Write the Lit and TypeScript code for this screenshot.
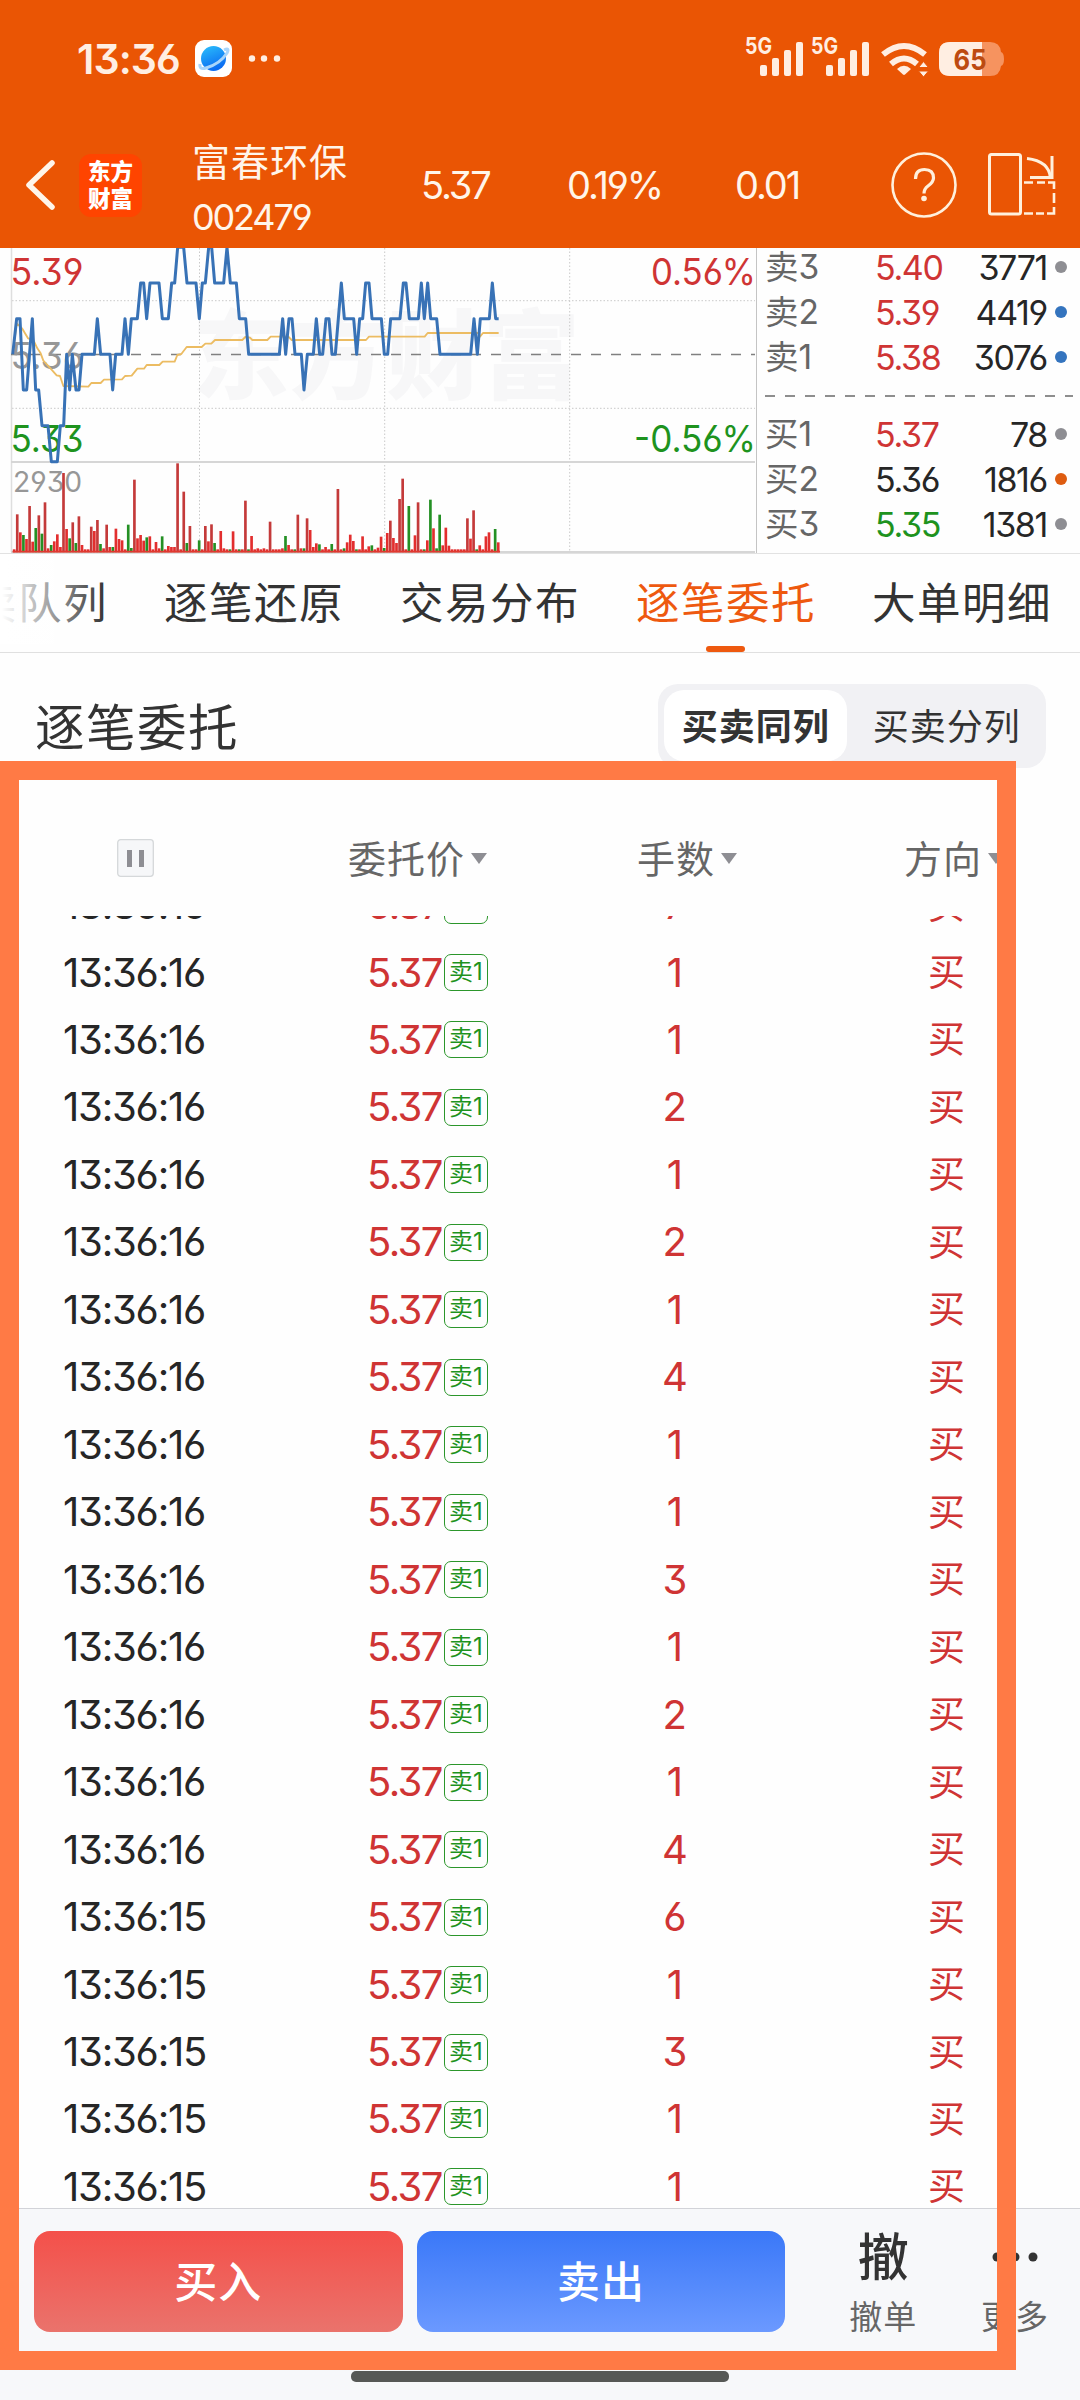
import { LitElement, html, css, svg } from "lit";
import { customElement } from "lit/decorators.js";
import { classMap } from "lit/directives/class-map.js";

const shared = css`
  * { box-sizing: border-box; }
  :host { display: block; font-family: "Noto Sans CJK SC", sans-serif; }
  svg { display: block; flex: none; overflow: visible; }
  .n {
    font-family: Inter, "Noto Sans CJK SC", sans-serif;
    font-feature-settings: "cv09" 1, "cv03" 1, "cv04" 1;
    letter-spacing: -0.04em;
    white-space: nowrap;
  }
`;

@customElement("status-bar")
class StatusBar extends LitElement {
  static styles = [shared, css`
    :host { height: 120px; color: #ffeee2; }
    .bar { display: flex; align-items: center; height: 118px; padding: 0 76px 0 77px; }
    .clock { font-size: 41px; font-weight: 600; line-height: 50px; width: 118px; letter-spacing: -0.022em; }
    .grow { flex: 1; }
  `];
  private signal(x: number) {
    return svg`
      <text x=${x} y="54" font-family="Inter, sans-serif" font-weight="700" font-size="23" textLength="27" lengthAdjust="spacingAndGlyphs">5G</text>
      <rect x=${x + 15} y="65" width="7" height="11" rx="2"/>
      <rect x=${x + 27} y="58" width="7" height="18" rx="2"/>
      <rect x=${x + 39} y="50" width="7" height="26" rx="2"/>
      <rect x=${x + 51} y="42" width="7" height="34" rx="2"/>`;
  }
  render() {
    return html`<div class="bar">
      <span class="n clock">13:36</span>
      <svg width="90" height="38" viewBox="195 41 90 38">
        <defs><linearGradient id="g" x1="0" y1="0" x2="0.4" y2="1"><stop offset="0" stop-color="#2cc0fb"/><stop offset="1" stop-color="#0b6cf2"/></linearGradient></defs>
        <rect x="195" y="41" width="37" height="37" rx="9" fill="#fff"/>
        <circle cx="213.500" cy="59.500" r="12.500" fill="url(#g)"/>
        <path d="M224 51 Q230 48 227 54 Q220 65 206 69 Q199 71 200 65" fill="none" stroke="#a9d5fb" stroke-width="3"/>
        <g fill="#ffeee2"><circle cx="252" cy="59.500" r="3.200"/><circle cx="264" cy="59.500" r="3.200"/><circle cx="277" cy="59.500" r="3.200"/></g>
      </svg>
      <span class="grow"></span>
      <svg width="259" height="60" viewBox="745 29 259 60" fill="#ffeee2">
        ${this.signal(745)}${this.signal(811)}
        <g fill="none" stroke="#ffeee2" stroke-width="6">
          <path d="M883 54.500 Q904 37.500 925 54.500"/>
          <path d="M891 64 Q904 53 917 64"/>
        </g>
        <path d="M897 69 Q904 62.500 911 69 L905 74.500 Q904 75.300 903 74.500Z"/>
        <path d="M923.500 61.500 l5 6 h-10z M923.500 77 l5 -6 h-10z" stroke="#ea5504" stroke-width="1"/>
        <path d="M950 42 H990 Q1000 42 1001 52 Q1004 53 1004 59 Q1004 65 1001 66 Q1000 76 990 76 H950 Q939 76 939 65 V53 Q939 42 950 42Z" fill="#f6935f"/>
        <path d="M950 42 H982 V76 H950 Q939 76 939 65 V53 Q939 42 950 42Z"/>
        <text x="953.500" y="69.500" font-family="Inter, sans-serif" font-weight="700" font-size="29" fill="#bd4a10" textLength="33" lengthAdjust="spacingAndGlyphs">65</text>
      </svg>
    </div>`;
  }
}

@customElement("stock-header")
class StockHeader extends LitElement {
  static styles = [shared, css`
    :host { height: 128px; color: #fff5ea; }
    .row { display: grid; grid-template-columns: 79px 113px 229px 146px 168px 157px 1fr; align-items: center; height: 130px; }
    .back { padding-left: 24px; }
    .logo { width: 63px; height: 63px; border-radius: 12px; background: #ff4400; color: #fff; font-weight: 900; font-size: 22.500px; line-height: 27px; text-align: center; padding-top: 3px; }
    .name { font-size: 38px; letter-spacing: 1px; line-height: 50px; margin-top: 1px; }
    .code { font-size: 36px; line-height: 40px; margin-top: 12px; letter-spacing: -0.06em; }
    .q { font-size: 38px; line-height: 50px; letter-spacing: -0.055em; }
    .icons { display: flex; gap: 31px; align-items: center; }
  `];
  render() {
    return html`<div class="row">
      <div class="back"><svg width="34" height="56" viewBox="0 0 34 56" fill="none" stroke="#fff5ea" stroke-width="5.500" stroke-linecap="round" stroke-linejoin="round"><path d="M28 6 L5 28 L28 50"/></svg></div>
      <div class="logo">东方<br>财富</div>
      <div><div class="name">富春环保</div><div class="n code">002479</div></div>
      <div class="n q">5.37</div>
      <div class="n q">0.19%</div>
      <div class="n q">0.01</div>
      <div class="icons">
        <svg width="66" height="66" viewBox="0 0 66 66" fill="none" stroke="#fff0dc" stroke-width="2.600">
          <circle cx="32" cy="33" r="31.500"/>
          <path d="M23.500 27 Q23.500 17.500 32.500 17.500 Q41.500 17.500 41.500 26 Q41.500 30 36 34 Q32 37 32 41.500" stroke-width="3.200"/>
          <circle cx="32" cy="46.500" r="2.800" fill="#fff0dc" stroke="none"/>
        </svg>
        <svg width="68" height="64" viewBox="989 153 68 64" fill="none" stroke="#fff0dc" stroke-width="3">
          <rect x="989.500" y="154.500" width="31" height="59.500" rx="2"/>
          <path d="M1027 158.500 Q1049 161 1050.500 178"/>
          <path d="M1052 156 V177.500 H1030"/>
          <path d="M1024 182.500 H1033 M1037 182.500 H1045 M1048 182.500 H1054 V189 M1054 193 V203 M1054 207 V213.500 H1047 M1044 213.500 H1036 M1033 213.500 H1024" stroke-width="2.600"/>
        </svg>
      </div>
    </div>`;
  }
}

const PRICE = "38,343 50,236 60,236 70,450 80,450 97,236 107,450 116,450 126,557 144,557 154,665 172,665 181,557 191,557 200,343 209,450 217,343 228,450 237,450 246,343 283,343 292,236 302,343 330,343 338,450 347,343 366,343 375,236 385,343 394,236 412,236 422,129 431,129 440,236 450,129 477,129 487,236 505,236 515,129 524,129 533,22 551,22 561,129 588,129 598,236 607,129 616,129 626,22 635,22 644,129 671,129 681,22 691,129 709,129 718,236 737,236 746,343 838,343 848,236 857,343 867,236 876,236 885,343 904,343 912,450 922,343 940,343 949,236 959,343 968,343 978,236 987,236 996,343 1006,343 1024,129 1033,236 1061,236 1070,343 1079,236 1088,236 1097,129 1107,129 1116,236 1144,236 1153,343 1163,343 1172,236 1200,236 1210,129 1218,129 1228,236 1255,236 1264,129 1273,236 1283,129 1292,236 1310,236 1320,343 1412,343 1422,236 1432,343 1441,236 1468,236 1477,129 1487,236 1496,236";
const AVERAGE = "38,343 50,250 66,265 84,295 100,300 112,325 122,340 130,362 154,388 170,406 180,408 190,438 265,440 274,429 302,429 312,419 366,418 375,408 395,407 412,386 432,386 440,375 478,375 488,365 524,365 532,345 544,342 560,321 605,321 616,311 634,311 645,300 727,300 736,291 750,293 757,300 802,300 812,290 865,290 875,300 1098,300 1107,290 1274,290 1283,279 1435,279 1440,290 1449,279 1496,279";
// Per-minute volume; a negative value is a falling minute.
const VOLUME = [9,114,60,-52,40,139,32,-73,111,-56,150,12,-22,33,54,16,238,70,-42,90,-28,108,22,9,9,77,64,97,-25,12,83,16,-16,71,40,36,9,-83,-13,218,42,52,35,-45,48,9,31,12,-48,9,19,16,16,267,9,182,-28,79,9,9,-36,9,79,33,84,-28,9,64,12,9,-9,63,9,-9,9,155,-9,49,9,12,9,12,9,92,9,9,9,12,-49,22,9,-9,113,12,-12,102,67,16,27,-24,9,16,9,-25,9,190,9,-12,30,53,34,-9,9,48,9,18,-21,9,14,47,-13,58,95,43,28,160,221,9,-139,9,51,150,9,-9,36,-158,72,-12,-113,21,74,20,9,9,9,9,9,102,41,126,-9,21,9,48,60,9,-70,30];

@customElement("minute-chart")
class MinuteChart extends LitElement {
  static styles = [shared, css`
    :host { overflow: hidden; }
    text { font-family: Inter, "Noto Sans CJK SC", sans-serif; font-feature-settings: "cv09" 1, "cv03" 1, "cv04" 1; }
    .mark { font-family: "Noto Sans CJK SC", sans-serif; font-weight: 900; font-size: 97px; fill: #f7f7f8; }
    .up { fill: #cf3434; } .down { fill: #1e931e; } .flat { fill: #979797; }
    .lab { font-size: 37px; }
  `];
  private label(x: number, y: number, w: number, cls: string, t: string) {
    return svg`<text class="lab ${cls}" x=${x} y=${y} textLength=${w} lengthAdjust="spacingAndGlyphs">${t}</text>`;
  }
  render() {
    return html`<svg width="757" height="305" viewBox="0 248 757 305">
      <text class="mark" x="192" y="391" textLength="388">东方财富</text>
      <g fill="none" stroke="#c9c9c9" stroke-width="1" stroke-dasharray="1.500 2">
        <path d="M12 300.700H755 M12 408.300H755 M199.500 248V552 M384.700 248V552 M569.700 248V552"/>
      </g>
      <path d="M11.500 248V552" stroke="#dedede" stroke-width="1.500"/>
      <path d="M11 462H755 M11 552H755" stroke="#d6d6d6" stroke-width="2"/>
      <path d="M756.500 248V553" stroke="#c4c4c4" stroke-width="1"/>
      <path d="M11 354.500H755" stroke="#808080" stroke-width="1.600" stroke-dasharray="10 10"/>
      ${this.label(10.5, 285, 73, "up", "5.39")}
      ${this.label(10.5, 368.5, 73, "flat", "5.36")}
      ${this.label(10.5, 452, 73, "down", "5.33")}
      ${this.label(651, 285, 105, "up", "0.56%")}
      ${this.label(634, 452, 122, "down", "-0.56%")}
      <text class="flat" x="13" y="492" font-size="28" textLength="69" lengthAdjust="spacingAndGlyphs">2930</text>
      <g transform="translate(0 240) scale(.33333)" fill="none" stroke-linejoin="round">
        <polyline points=${AVERAGE} stroke="#ecbc62" stroke-width="5.500"/>
        ${VOLUME.map((v, i) => svg`<rect x=${38.5 + i * 9.25} y=${937 - Math.abs(v)} width="8" height=${Math.abs(v)} fill=${v < 0 ? "#249024" : Math.abs(v) > 75 ? "#c43a3a" : "#e22e2e"}/>`)}
        <path d="M38 935H1500" stroke="#e03a30" stroke-width="5"/>
        <polyline points=${PRICE} stroke="#3872b6" stroke-width="9"/>
      </g>
    </svg>`;
  }
}

@customElement("order-book")
class OrderBook extends LitElement {
  static styles = [shared, css`
    :host { flex: 1; padding: 0 13px 0 8px; }
    .row { display: grid; grid-template-columns: 110px 1fr 7px 13px; height: 45px; align-items: center; font-size: 34px; line-height: 45px; color: #262626; }
    .rows { height: 135px; margin-top: -3px; }
    .row > * { margin-top: -1px; }
    .side { color: #666; font-size: 33.500px; letter-spacing: 0; }
    .vals { display: flex; justify-content: space-between; }
    .up { color: #cf3434; } .down { color: #1e931e; }
    .dot { width: 12px; height: 12px; border-radius: 50%; background: #8e8e93; grid-column: 4; margin-left: 1px; }
    .blue { background: #3474be; } .orange { background: #de5c10; }
    .dash { height: 2px; margin: 15px -6px 15px 0; background: repeating-linear-gradient(90deg, #8e8e8e 0 10px, transparent 10px 20px); }
    .buy { margin-top: 1px; }
  `];
  private row([s, p, c, q, d]: string[]) {
    return html`<div class="row"><span class="n side">${s}</span><span class="vals"><span class="n ${c}">${p}</span><span class="n">${q}</span></span><i class="dot ${d}"></i></div>`;
  }
  render() {
    return html`
      <div class="rows">${[["卖3", "5.40", "up", "3771", ""], ["卖2", "5.39", "up", "4419", "blue"], ["卖1", "5.38", "up", "3076", "blue"]].map((r) => this.row(r))}</div>
      <div class="dash"></div>
      <div class="rows buy">${[["买1", "5.37", "up", "78", ""], ["买2", "5.36", "", "1816", "orange"], ["买3", "5.35", "down", "1381", ""]].map((r) => this.row(r))}</div>`;
  }
}

@customElement("detail-tabs")
class DetailTabs extends LitElement {
  static styles = [shared, css`
    :host { height: 100px; border-top: 1px solid #e2e2e2; border-bottom: 1px solid #e0e0e0; }
    .tabs { position: relative; display: flex; gap: 56px; margin-left: -72px; overflow: hidden; height: 98px; width: 1152px; font-size: 43.500px; letter-spacing: 1.500px; color: #333; white-space: nowrap; }
    .tab { flex: none; width: 180px; line-height: 94px; display: flex; flex-direction: column; align-items: center; }
    .tab span { height: 92px; }
    .on { color: #ee590f; }
    .on::after { content: ""; width: 39px; height: 6px; border-radius: 3px; background: #ee590f; margin-right: 1px; }
    .fade { position: absolute; left: 72px; top: 0; width: 106px; height: 90px; background: linear-gradient(90deg, #fff 2%, #fff0); }
  `];
  render() {
    return html`<div class="tabs">
      ${["买卖队列", "逐笔还原", "交易分布", "逐笔委托", "大单明细"].map((t) => html`<div class=${classMap({ tab: true, on: t === "逐笔委托" })}><span>${t}</span></div>`)}
      <i class="fade"></i>
    </div>`;
  }
}

@customElement("list-title")
class ListTitle extends LitElement {
  static styles = [shared, css`
    .bar { display: flex; justify-content: space-between; align-items: center; padding: 31px 34px 0 35px; height: 114px; color: #333; }
    .title { font-size: 49.500px; letter-spacing: 1.500px; line-height: 60px; margin-top: -2px; }
    .seg { display: flex; width: 388px; height: 84px; border-radius: 20px; background: #f1f1f4; padding: 6px; font-size: 36px; letter-spacing: 1px; line-height: 68px; }
    .seg div { width: 185px; height: 71px; text-align: center; border-radius: 20px; }
    .seg .on { background: #fff; font-weight: 700; padding-left: 1px; }
    .seg .off { width: 196px; padding-left: 7px; }
  `];
  render() {
    return html`<div class="bar"><div class="title">逐笔委托</div><div class="seg"><div class="on">买卖同列</div><div class="off">买卖分列</div></div></div>`;
  }
}

@customElement("order-table")
class OrderTable extends LitElement {
  static styles = [shared, css`
    :host { height: 1441px; overflow: hidden; }
    .head, .row { display: grid; grid-template-columns: 63px 304px 228px 334px 1fr; align-items: center; }
    .head { height: 149px; padding-top: 36px; color: #666; font-size: 38px; letter-spacing: 1px; line-height: 50px; grid-template-columns: 117px 231px 289px 267px 1fr; }
    .head > * { margin-top: -5px; }
    .head > svg { margin-top: -4px; }
    .h { display: flex; align-items: center; gap: 6px; white-space: nowrap; }
    .tri { width: 0; height: 0; border: 8.500px solid transparent; border-top: 11px solid #8e8e93; border-bottom: 0; margin-top: 3px; }
    .list { height: 1292px; overflow: hidden; }
    .list .row:first-child { margin-top: -44.700px; }
    .row { height: 67.480px; font-size: 40px; line-height: 50px; color: #262626; }
    .time { letter-spacing: -0.03em; }
    .price { display: flex; align-items: center; color: #cf3434; }
    .val { width: 77px; }
    .badge { width: 44px; height: 37px; border: 1.500px solid #2b962b; border-radius: 7px; color: #1e931e; font-size: 24px; line-height: 34px; text-align: center; letter-spacing: 0; }
    .lots { color: #cf3434; text-align: center; width: 158px; }
    .dir { color: #cf3434; font-size: 37px; margin-top: -5px; margin-left: -1px; }
  `];
  render() {
    const lots = [7, 1, 1, 2, 1, 2, 1, 4, 1, 1, 3, 1, 2, 1, 4, 6, 1, 3, 1, 1];
    return html`
      <div class="head">
        <span></span>
        <svg width="37" height="38" viewBox="0 0 37 38"><rect x=".7" y=".7" width="35.600" height="36.600" rx="3" fill="#f6f7f9" stroke="#d5d8da" stroke-width="1.300"/><path d="M12.500 11V28M24.500 11V28" stroke="#8e8e93" stroke-width="5"/></svg>
        <span class="h">委托价<i class="tri"></i></span><span class="h">手数<i class="tri"></i></span><span class="h">方向<i class="tri"></i></span>
      </div>
      <div class="list">
        ${lots.map((l, i) => html`<div class="row"><span></span><span class="n time">13:36:${i < 15 ? 16 : 15}</span>
          <span class="price"><span class="n val">5.37</span><span class="n badge">卖1</span></span>
          <span class="n lots">${l}</span><span class="dir">买</span></div>`)}
      </div>`;
  }
}

@customElement("trade-bar")
class TradeBar extends LitElement {
  static styles = [shared, css`
    :host { height: 192px; background: #f7f8fa; border-top: 1px solid #d2d3d8; }
    .bar { display: flex; padding: 22px 0 0 34px; height: 162px; }
    .btn { width: 369px; height: 101px; border-radius: 16px; margin-right: 14px; color: #fff; font-size: 43px; font-weight: 500; letter-spacing: 1px; line-height: 97px; text-align: center; }
    .buy { background: linear-gradient(#f4504a, #ea736c); }
    .sell { background: linear-gradient(#3a78f8, #6b99ff); }
    .act { width: 130px; text-align: center; color: #666; font-size: 33px; line-height: 40px; letter-spacing: 1px; margin-left: 19px; }
    .more { margin-left: 2px; }
    .big { color: #333; font-size: 51px; font-weight: 500; height: 64px; line-height: 46px; letter-spacing: 0; }
    .more svg { margin: 0 auto; }
    .home { width: 378px; height: 11px; border-radius: 5px; background: #565856; margin: 0 auto; }
  `];
  render() {
    return html`<div class="bar">
      <div class="btn buy">买入</div><div class="btn sell">卖出</div>
      <div class="act"><div class="big">撤</div>撤单</div>
      <div class="act more"><div class="big"><svg width="50" height="50" fill="#333"><circle cx="7" cy="26" r="4.500"/><circle cx="25" cy="26" r="4.500"/><circle cx="43" cy="26" r="4.500"/></svg></div>更多</div>
    </div><div class="home"></div>`;
  }
}

@customElement("app-root")
class AppRoot extends LitElement {
  static styles = [shared, css`
    :host { position: relative; width: 1080px; height: 2400px; overflow: hidden; background: #fefefe; }
    .top { background: #ea5504; height: 248px; }
    .market { display: flex; height: 305px; overflow: hidden; }
    .frame { position: absolute; left: 0; top: 761px; width: 1016px; height: 1609px; border: 19px solid #ff7a45; }
  `];
  render() {
    return html`
      <div class="top"><status-bar></status-bar><stock-header></stock-header></div>
      <div class="market"><minute-chart></minute-chart><order-book></order-book></div>
      <detail-tabs></detail-tabs>
      <list-title></list-title>
      <order-table></order-table>
      <trade-bar></trade-bar>
      <div class="frame"></div>`;
  }
}
